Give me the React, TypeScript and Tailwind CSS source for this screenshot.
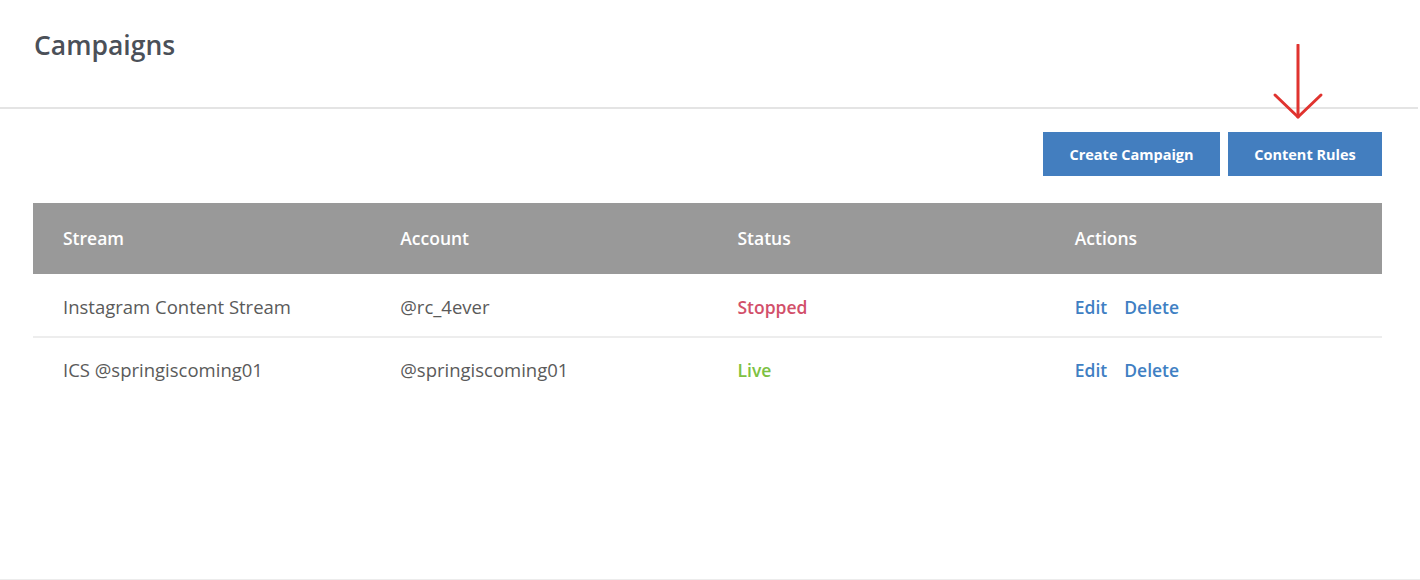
import React from "react";

const rows = [
  { stream: "Instagram Content Stream", account: "@rc_4ever", status: "Stopped" },
  { stream: "ICS @springiscoming01", account: "@springiscoming01", status: "Live" },
];

export default function App() {
  return (
    <div
      className="w-[1420px] h-[580px] bg-white flex flex-col overflow-hidden"
      style={{ fontFamily: "'Open Sans', Lato, sans-serif" }}
    >
      <div className="h-[109px] border-b-2 border-[#e4e4e4] w-[1418px] pl-[34px] pt-[28px]">
        <h1 className="text-[26.5px] font-semibold text-[#4b5058] leading-[34px]">Campaigns</h1>
      </div>
      <div className="relative flex-1 flex flex-col border-b border-[#ececec] w-[1420px]">
        <svg
          className="absolute left-[1270px] top-[-65px]"
          width="58"
          height="80"
          viewBox="0 0 58 80"
          fill="none"
        >
          <path d="M28 1 V73" stroke="#e0332f" strokeWidth="3" strokeLinecap="round" />
          <path d="M5 51 L28 73 L51 51" stroke="#e0332f" strokeWidth="3" strokeLinecap="round" strokeLinejoin="round" />
        </svg>
        <div className="flex justify-end gap-[8px] pr-[38px] pt-[23px]">
          <button className="w-[177px] h-[44px] bg-[#437ebf] text-white text-[14.5px] font-bold pt-[2px]">
            Create Campaign
          </button>
          <button className="w-[154px] h-[44px] bg-[#437ebf] text-white text-[14.5px] font-bold pt-[2px]">
            Content Rules
          </button>
        </div>
        <div className="ml-[33px] mr-[38px] mt-[27px]">
          <div className="grid grid-cols-4 h-[71px] bg-[#999999] items-center text-white text-[17.5px] font-semibold">
            <div className="pl-[30px]">Stream</div>
            <div className="pl-[30px]">Account</div>
            <div className="pl-[30px]">Status</div>
            <div className="pl-[30px]">Actions</div>
          </div>
          {rows.map((r, i) => (
            <div
              key={i}
              className={`grid grid-cols-4 h-[64px] items-center text-[17.5px] text-[#5a5a5a] ${
                i === 0 ? "border-b-2 border-[#ededed] pt-[4px]" : ""
              }`}
            >
              <div className="pl-[30px] text-[18.5px]">{r.stream}</div>
              <div className="pl-[30px] text-[18.5px]">{r.account}</div>
              <div
                className={`pl-[30px] font-semibold ${
                  r.status === "Live" ? "text-[#7dc142]" : "text-[#d2506a]"
                }`}
              >
                {r.status}
              </div>
              <div className="pl-[30px] flex gap-[17px] font-semibold text-[#3f7fc3]">
                <span>Edit</span>
                <span>Delete</span>
              </div>
            </div>
          ))}
        </div>
      </div>
    </div>
  );
}
